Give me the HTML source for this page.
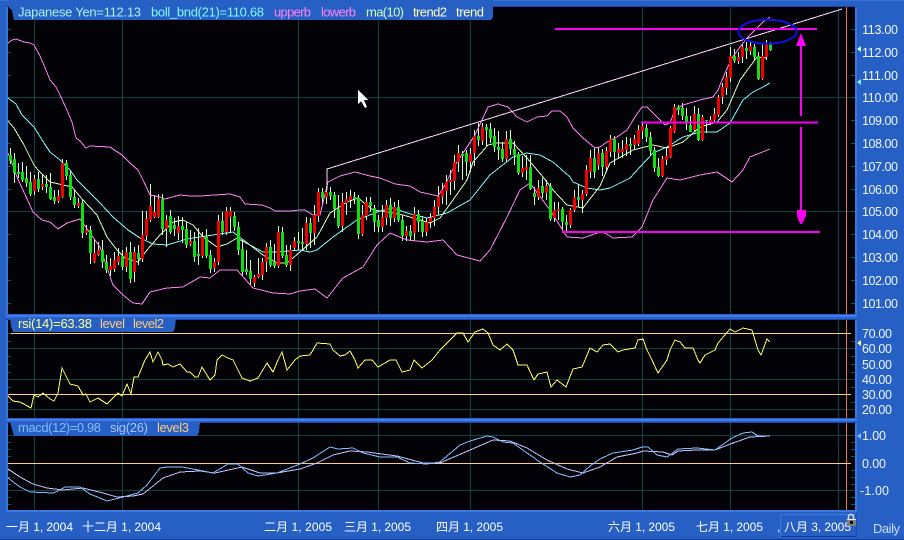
<!DOCTYPE html>
<html><head><meta charset="utf-8"><style>
html,body{margin:0;padding:0;background:#2660c4;width:904px;height:540px;overflow:hidden}
svg{display:block}
text{font-family:"Liberation Sans","Noto Sans CJK SC",sans-serif;font-size:12px}
.t{font-size:13px}
.y{font-size:12.5px}
</style></head><body>
<svg xmlns="http://www.w3.org/2000/svg" width="904" height="540" viewBox="0 0 904 540">
<rect width="904" height="540" fill="#2660c4"/>
<rect y="0" width="904" height="1" fill="#3a70d8"/>
<rect y="539" width="904" height="1" fill="#143a9c"/>
<rect x="8" y="7" width="847" height="504" fill="#030207"/>
<g shape-rendering="crispEdges" fill="none">
<path stroke="#0f4442" d="M34.5 7V511M122.5 7V511M298.5 7V511M378.5 7V511M470.5 7V511M642.5 7V511M730.5 7V511M838.5 7V511M8 97.5H855M8 211.5H855M8 348.5H855M8 379.5H855M8 409.5H855M8 435.5H855M8 490.5H855"/>
<path stroke="#e87830" d="M846.5 7V511"/>
<path stroke="#ffcc88" d="M8 333.5H851M8 394.5H851M8 463.5H851"/>
<path stroke="#0f5a58" d="M8 29.5h3M8 52.5h3M8 75.5h3M8 120.5h3M8 143.5h3M8 166.5h3M8 189.5h3M8 234.5h3M8 257.5h3M8 280.5h3M8 303.5h3M851 29.5h4M851 52.5h4M851 75.5h4M851 97.5h4M851 120.5h4M851 143.5h4M851 166.5h4M851 189.5h4M851 211.5h4M851 234.5h4M851 257.5h4M851 280.5h4M851 303.5h4M8 333.5h3M8 341.5h3M8 356.5h3M8 364.5h3M8 372.5h3M8 387.5h3M8 402.5h3M851 341.5h4M851 356.5h4M851 364.5h4M851 372.5h4M851 387.5h4M851 402.5h4M8 442.5h3M8 449.5h3M8 456.5h3M8 470.5h3M8 477.5h3M8 484.5h3M8 497.5h3M8 504.5h3M851 442.5h4M851 449.5h4M851 456.5h4M851 470.5h4M851 477.5h4M851 484.5h4M851 497.5h4M851 504.5h4"/>
<!-- wicks -->
<path stroke="#c8ffc8" d="M10.5 148V164M14.5 153V183M18.5 163V178M22.5 162V182M26.5 166V187M30.5 172V196M34.5 175V195M38.5 172V192M42.5 175V190M46.5 175V193M50.5 173V200M54.5 190V204M58.5 190V203M62.5 159V198M66.5 160V180M70.5 170V200M74.5 190V208M78.5 198V208M82.5 200V238M86.5 225V235M90.5 226V264M94.5 240V263M98.5 242V256M102.5 240V268M106.5 255V273M110.5 258V276M114.5 252V272M118.5 248V265M122.5 250V270M126.5 247V272M130.5 242V283M134.5 247V282M138.5 245V265M142.5 211V262M146.5 211V240M150.5 184V222M154.5 195V218M158.5 194V218M162.5 194V235M166.5 215V247M170.5 210V234M174.5 218V236M178.5 216V240M182.5 217V243M186.5 222V248M190.5 230V246M194.5 232V262M198.5 228V265M202.5 232V258M206.5 229V258M210.5 250V273M214.5 258V272M218.5 215V265M222.5 212V235M226.5 207V235M230.5 207V232M234.5 212V231M238.5 222V255M242.5 240V276M246.5 250V275M250.5 260V285M254.5 275V287M258.5 258V278M262.5 258V280M266.5 243V272M270.5 240V267M274.5 244V268M278.5 226V268M282.5 227V258M286.5 245V267M290.5 245V271M294.5 237V250M298.5 232V250M302.5 228V250M306.5 217V250M310.5 218V248M314.5 205V245M318.5 188V222M322.5 188V205M326.5 186V204M330.5 187V200M334.5 192V218M338.5 195V228M342.5 193V232M346.5 192V215M350.5 190V208M354.5 192V204M358.5 195V239M362.5 205V236M366.5 197V220M370.5 197V212M374.5 205V232M378.5 215V232M382.5 205V232M386.5 200V225M390.5 198V226M394.5 202V222M398.5 200V222M402.5 215V241M406.5 226V241M410.5 225V241M414.5 207V241M418.5 210V232M422.5 216V237M426.5 218V236M430.5 213V228M434.5 200V226M438.5 186V215M442.5 183V204M446.5 175V205M450.5 170V195M454.5 155V190M458.5 145V172M462.5 151V180M466.5 150V176M470.5 148V172M474.5 130V166M478.5 123V146M482.5 123V145M486.5 124V146M490.5 123V143M494.5 128V152M498.5 131V160M502.5 142V162M506.5 131V162M510.5 130V155M514.5 141V165M518.5 152V175M522.5 156V177M526.5 155V180M530.5 155V190M534.5 187V205M538.5 180V200M542.5 178V198M546.5 180V200M550.5 183V221M554.5 202V222M558.5 202V220M562.5 207V230M566.5 215V232M570.5 208V228M574.5 190V212M578.5 185V207M582.5 190V213M586.5 165V196M590.5 150V178M594.5 147V178M598.5 148V170M602.5 149V176M606.5 147V172M610.5 135V157M614.5 136V165M618.5 143V159M622.5 140V158M626.5 137V156M630.5 138V155M634.5 135V150M638.5 125V146M642.5 123V139M646.5 124V142M650.5 132V155M654.5 147V172M658.5 158V177M662.5 156V177M666.5 148V165M670.5 126V158M674.5 104V133M678.5 105V115M682.5 103V120M686.5 108V130M690.5 116V132M694.5 106V132M698.5 108V141M702.5 115V141M706.5 120V133M710.5 116V125M714.5 108V122M718.5 95V117M722.5 83V104M726.5 72V95M730.5 47V82M734.5 49V63M738.5 52V64M742.5 44V63M746.5 42V59M750.5 41V55M754.5 44V60M758.5 52V80M762.5 44V80M766.5 40V60M770.5 42V51"/>
<!-- bands -->
<polyline stroke="#ff80f0" points="8,43 12,40 16,39 24,42 30,43 34,45 40,56 46,70 50,80 56,87 60,95 66,108 72,122 76,138 80,141 86,148 90,146 110,147 122,155 130,163 138,170 143,180 150,195 160,197 165,199 180,195 190,196 200,196 230,194 240,197 245,204 262,205 270,208 275,211 290,211 300,210 305,210 313,215 320,215 328,182 340,176 355,172 370,176 380,178 395,184 410,186 420,192 438,196 445,185 455,165 465,150 475,135 482,120 488,107 498,104 508,107 517,117 527,122 537,117 547,116 552,111 560,111 567,117 573,128 583,138 595,148 600,147 607,142 617,137 627,130 635,117 642,107 647,107 655,115 665,125 670,123 675,110 683,105 700,100 713,97 718,90 725,73 732,58 740,47 747,38 755,30 763,22 770,17"/>
<polyline stroke="#ff80f0" points="8,153 12,163 17,177 33,212 42,220 50,222 58,229 67,223 80,219 100,247 113,285 123,295 133,303 142,304 150,292 167,288 183,287 200,277 210,278 220,270 237,270 253,288 273,293 290,294 300,291 315,289 327,298 343,278 363,267 377,245 390,233 407,240 427,242 443,240 457,255 480,261 490,250 507,217 520,190 530,183 550,210 567,237 583,238 600,232 605,233 613,238 632,237 642,227 653,200 667,178 680,180 700,175 717,172 732,182 743,170 750,157 770,149"/>
<polyline stroke="#80f8f8" points="8,98 16,104 22,115 34,127 44,143 50,152 60,160 70,170 77,180 100,203 113,217 128,230 140,238 153,244 167,245 187,239 213,235 233,232 250,245 263,252 277,252 300,250 310,252 317,250 333,237 357,220 380,211 393,208 407,213 427,218 447,213 470,200 490,175 500,167 513,157 527,153 540,155 553,162 570,177 573,182 587,188 600,190 610,188 630,178 640,167 653,153 667,147 683,137 700,132 717,132 730,123 743,100 753,92 763,87 770,83"/>
<polyline stroke="#d8ffc0" points="8,121 14,128 24,145 34,165 38,170 50,182 72,187 83,200 97,215 107,237 117,250 125,258 138,262 147,250 160,235 173,222 183,220 193,225 203,237 217,247 227,244 237,238 250,245 263,255 277,263 287,263 300,252 317,237 330,213 347,202 358,198 373,210 387,212 403,215 430,223 440,218 453,200 467,180 473,162 488,145 497,143 513,143 527,158 543,177 553,190 567,205 583,208 600,186 610,163 633,150 653,145 667,148 683,142 700,127 717,122 727,110 740,80 757,57 767,58"/>
<!-- trend -->
<polyline stroke="#ffd8ff" points="327,190 327,169 842,9"/>
<!-- bodies -->
<path stroke="#10e010" stroke-width="3" d="M10.5 155V161M14.5 159V173M18.5 172V174M22.5 172V180M26.5 178V183M30.5 182V194M38.5 179V189M46.5 184V187M50.5 187V199M54.5 197V201M66.5 163V176M70.5 175V197M74.5 197V205M82.5 203V233M90.5 230V253M102.5 250V262M106.5 262V270M122.5 256V267M130.5 252V279M138.5 253V259M162.5 199V229M170.5 216V232M174.5 225V229M182.5 226V230M186.5 229V245M194.5 241V257M198.5 254V256M206.5 237V256M210.5 255V269M222.5 221V232M234.5 216V227M238.5 227V250M242.5 249V272M246.5 269V272M250.5 271V279M270.5 247V265M274.5 262V266M282.5 232V256M286.5 255V265M298.5 241V243M302.5 242V244M310.5 223V233M322.5 192V198M330.5 192V196M334.5 195V209M338.5 209V226M354.5 197V199M358.5 198V234M370.5 202V206M374.5 208V222M378.5 220V227M390.5 205V218M398.5 207V220M402.5 220V236M410.5 231V236M418.5 214V222M422.5 221V232M462.5 154V156M466.5 153V162M478.5 136V140M486.5 127V130M490.5 129V138M494.5 136V147M498.5 147V150M502.5 149V159M510.5 139V149M514.5 149V155M518.5 154V173M530.5 167V189M534.5 193V197M542.5 186V193M550.5 186V219M562.5 209V222M566.5 222V225M578.5 197V200M594.5 158V172M602.5 153V167M614.5 139V152M630.5 144V146M646.5 128V137M650.5 137V151M654.5 150V168M658.5 167V176M678.5 107V110M682.5 108V116M686.5 116V122M690.5 125V132M698.5 114V140M706.5 120V121M734.5 56V61M746.5 48V51M754.5 47V57M758.5 56V79M770.5 43V50"/>
<path stroke="#f40000" stroke-width="3" d="M34.5 179V191M42.5 184V187M58.5 196V201M62.5 163V197M78.5 203V206M86.5 230V233M94.5 253V262M98.5 250V255M110.5 266V270M114.5 260V269M118.5 256V262M126.5 252V267M134.5 252V272M142.5 235V259M146.5 219V236M150.5 206V220M154.5 212V217M158.5 199V217M166.5 220V229M178.5 226V233M190.5 241V244M202.5 237V256M214.5 262V268M218.5 221V262M226.5 211V232M230.5 211V217M254.5 277V283M258.5 274V277M262.5 262V275M266.5 247V262M278.5 232V266M290.5 250V265M294.5 241V248M306.5 223V244M314.5 215V233M318.5 192V216M326.5 192V197M342.5 202V226M346.5 199V203M350.5 196V200M362.5 215V234M366.5 202V216M382.5 217V227M386.5 205V218M394.5 207V218M406.5 231V236M414.5 214V233M426.5 222V232M430.5 218V222M434.5 207V218M438.5 197V207M442.5 190V197M446.5 182V191M450.5 180V182M454.5 162V181M458.5 153V162M470.5 154V162M474.5 136V153M482.5 127V141M506.5 139V159M522.5 168V173M526.5 167V170M538.5 188V197M546.5 186V193M554.5 210V218M558.5 209V211M570.5 210V225M574.5 197V210M582.5 194V200M586.5 170V194M590.5 158V172M598.5 153V165M606.5 151V167M610.5 139V152M618.5 149V153M622.5 149V152M626.5 144V150M634.5 139V145M638.5 130V144M642.5 126V131M662.5 159V176M666.5 156V160M670.5 128V157M674.5 107V132M694.5 114V130M702.5 117V140M710.5 120V122M714.5 114V120M718.5 97V115M722.5 87V97M726.5 77V88M730.5 56V78M738.5 57V61M742.5 47V57M750.5 46V51M762.5 56V79M766.5 44V57"/>
<!-- rsi -->
<polyline stroke="#ffff60" points="8,396 13,401 20,402 31,408 34,395 38,397 43,393 50,399 54,401 58,393 62,368 70,384 78,386 83,395 86,394 90,402 98,398 107,404 118,393 122,396 127,384 131,394 134,377 138,377 145,360 150,352 153,362 158,352 162,360 163,365 168,364 173,367 180,364 187,372 190,372 195,377 198,377 202,367 210,380 215,375 217,360 222,355 228,358 233,360 242,378 250,381 258,378 267,363 273,372 278,360 282,352 287,370 295,360 300,356 310,355 317,343 330,344 333,350 340,356 345,355 350,351 355,360 358,368 365,360 372,360 378,367 390,360 396,360 402,372 410,370 414,360 422,368 432,360 440,350 457,333 463,333 468,342 475,332 483,329 488,333 493,345 500,350 507,344 513,350 518,365 527,365 534,380 538,374 547,372 551,387 557,380 566,387 573,369 582,367 585,360 590,348 597,352 603,345 610,344 618,352 623,350 635,348 638,340 643,339 647,350 652,360 658,373 667,360 670,350 675,340 680,342 685,348 693,348 698,360 700,363 705,355 715,350 718,343 730,329 735,332 743,328 752,330 758,350 761,355 767,339 770,342"/>
<!-- macd -->
<polyline stroke="#c8c0ff" points="8,469 20,477 33,484 47,488 63,490 83,488 103,493 117,497 133,496 143,494 163,478 180,472 200,471 215,473 242,467 260,473 277,473 300,469 317,463 333,455 350,451 367,452 397,456 423,463 440,463 470,450 493,440 510,441 527,448 547,460 567,469 583,473 600,467 617,457 637,453 643,451 663,452 672,455 678,451 697,450 715,450 733,443 750,437 770,436"/>
<polyline stroke="#80c0ff" points="8,478 20,487 30,492 53,493 58,491 65,487 80,487 90,494 107,501 123,497 138,493 147,485 160,468 167,467 182,467 193,469 213,473 228,464 238,464 248,473 258,476 277,473 300,464 313,458 330,447 338,449 353,448 363,453 380,457 397,457 410,463 427,464 440,462 460,445 470,441 487,436 493,437 503,442 513,443 527,453 543,464 557,473 570,477 580,475 590,466 600,459 613,453 633,450 642,447 648,447 657,455 667,457 678,449 697,448 715,450 732,438 743,433 752,432 758,436 770,436"/>
<!-- magenta annotations -->
<path stroke="#f800f0" stroke-width="2" d="M555 29H817M641 122.5H818M562 232H820M801 46V116M801 127V212"/>
<path fill="#f800f0" stroke="none" d="M801 33L806 46H796ZM797 210H806V216L802 224H800L797 216Z"/>
<ellipse cx="767.5" cy="31.7" rx="29" ry="12" stroke="#1010e0" stroke-width="2"/>
</g>
<!-- frame -->
<g shape-rendering="crispEdges">
<rect x="6" y="6" width="2" height="506" fill="#3c78e0"/>
<rect x="855" y="6" width="2" height="506" fill="#3c78e0"/>
<rect x="6" y="6" width="851" height="1" fill="#1c44b0"/>
<rect x="6" y="510" width="851" height="2" fill="#3c78e0"/>
<rect x="6" y="314" width="851" height="6" fill="#2a62cc"/>
<rect x="6" y="315" width="851" height="2" fill="#3e7cea"/>
<rect x="6" y="319" width="851" height="1" fill="#1c44b0"/>
<rect x="6" y="418" width="851" height="5" fill="#2a62cc"/>
<rect x="6" y="419" width="851" height="2" fill="#3e7cea"/>
<rect x="6" y="422" width="851" height="1" fill="#1c44b0"/>
<!-- tabs -->
<polygon points="8,0 494,0 493,8 493,17 491,20 14,20 12,10 9,8" fill="#2660c4"/>
<polygon points="10,318 176,318 175,328 173,332 13,332 11,326" fill="#2660c4"/>
<polygon points="10,422 200,422 199,432 197,436 14,436 12,429" fill="#2660c4"/>
</g>
<!-- tab text -->
<g class="t">
<text class="t" x="18" y="16.5" fill="#a8f0e8" textLength="123">Japanese Yen=112.13</text>
<text class="t" x="151" y="16.5" fill="#80f8f8" textLength="113">boll_bnd(21)=110.68</text>
<text class="t" x="274" y="16.5" fill="#ff80f0" textLength="37">upperb</text>
<text class="t" x="321" y="16.5" fill="#ff80f0" textLength="35">lowerb</text>
<text class="t" x="366" y="16.5" fill="#c8ffb8" textLength="38">ma(10)</text>
<text class="t" x="413" y="16.5" fill="#ffffc0" textLength="34">trend2</text>
<text class="t" x="456" y="16.5" fill="#ffffc0" textLength="28">trend</text>
<text class="t" x="18" y="328" fill="#ffff90" textLength="74">rsi(14)=63.38</text>
<text class="t" x="100" y="328" fill="#ffc880" textLength="25">level</text>
<text class="t" x="133" y="328" fill="#ffc880" textLength="31">level2</text>
<text class="t" x="18" y="432" fill="#88b8ff" textLength="83">macd(12)=0.98</text>
<text class="t" x="110" y="432" fill="#a8c4ff" textLength="38">sig(26)</text>
<text class="t" x="157" y="432" fill="#ffc880" textLength="32">level3</text>
</g>
<!-- y labels -->
<g fill="#f0f6ff">
<text class="y" x="862" y="34" textLength="36">113.00</text>
<text class="y" x="862" y="57" textLength="36">112.00</text>
<text class="y" x="862" y="80" textLength="36">111.00</text>
<text class="y" x="862" y="102" textLength="36">110.00</text>
<text class="y" x="862" y="125" textLength="36">109.00</text>
<text class="y" x="862" y="148" textLength="36">108.00</text>
<text class="y" x="862" y="171" textLength="36">107.00</text>
<text class="y" x="862" y="194" textLength="36">106.00</text>
<text class="y" x="862" y="216" textLength="36">105.00</text>
<text class="y" x="862" y="239" textLength="36">104.00</text>
<text class="y" x="862" y="262" textLength="36">103.00</text>
<text class="y" x="862" y="285" textLength="36">102.00</text>
<text class="y" x="862" y="308" textLength="36">101.00</text>
<text class="y" x="862" y="338" textLength="30">70.00</text>
<text class="y" x="862" y="353" textLength="30">60.00</text>
<text class="y" x="862" y="369" textLength="30">50.00</text>
<text class="y" x="862" y="384" textLength="30">40.00</text>
<text class="y" x="862" y="399" textLength="30">30.00</text>
<text class="y" x="862" y="414" textLength="30">20.00</text>
<text class="y" x="862" y="440" textLength="24">1.00</text>
<text class="y" x="862" y="468" textLength="24">0.00</text>
<text class="y" x="860" y="495" textLength="29">-1.00</text>
</g>
<polygon points="857,49 861,46 861,52" fill="#c8ffb8"/>
<polygon points="857,82 861,79 861,85" fill="#80f8f8"/>
<polygon points="857,343 861,340 861,346" fill="#ffff80"/>
<polygon points="857,436 861,433 861,439" fill="#80c0ff"/>
<!-- date labels -->
<g fill="#ffffff">
<text x="6" y="531" textLength="67">一月 1, 2004</text>
<text x="82" y="531" textLength="79">十二月 1, 2004</text>
<text x="264" y="531" textLength="68">二月 1, 2005</text>
<text x="344" y="531" textLength="67">三月 1, 2005</text>
<text x="436" y="531" textLength="67">四月 1, 2005</text>
<text x="608" y="531" textLength="67">六月 1, 2005</text>
<text x="696" y="531" textLength="67">七月 1, 2005</text>
<text x="777" y="531">,</text>
</g>
<rect x="780.5" y="514.5" width="75" height="22" fill="#2660c4" stroke="#3c78e0"/>
<path d="M781 536.5H856V514" fill="none" stroke="#143a9c" shape-rendering="crispEdges"/>
<text x="784" y="531" fill="#ffffff" textLength="67">八月 3, 2005</text>
<text class="t" x="873" y="533" fill="#c8dcff" textLength="27">Daily</text>
<!-- lock -->
<path d="M848.5 519V516.5Q848.5 514.5 851 514.5Q853.5 514.5 853.5 516.5V519" fill="none" stroke="#d8d8d8" stroke-width="1.5"/>
<rect x="847" y="519" width="9" height="7" fill="#808080"/>
<rect x="847" y="519" width="9" height="1" fill="#f0f0f0"/>
<rect x="850" y="521" width="3" height="3" fill="#101010"/>
<!-- cursor -->
<path d="M358 90V104L361 101L365 108L367 107L364 100H368Z" fill="#ffffff" shape-rendering="crispEdges"/>
</svg>
</body></html>
